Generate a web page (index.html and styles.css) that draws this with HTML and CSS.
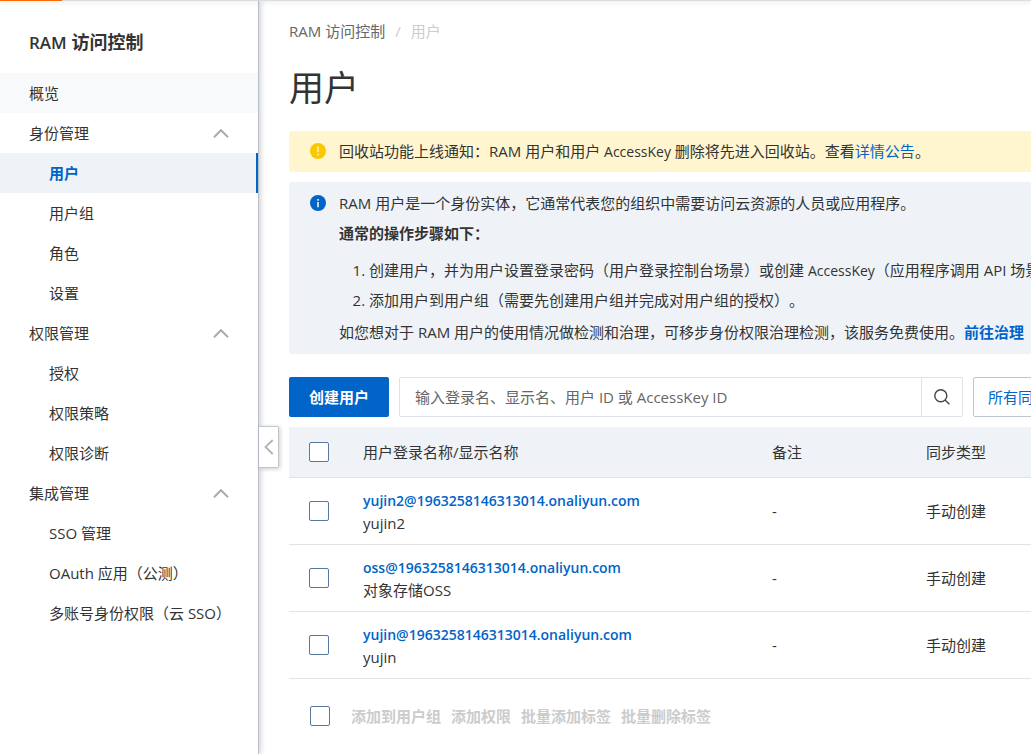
FILE: index.html
```html
<!DOCTYPE html>
<html lang="zh-CN">
<head>
<meta charset="utf-8">
<meta name="viewport" content="width=device-width, initial-scale=1">
<title>RAM 访问控制</title>
<link rel="stylesheet" href="styles.css">
</head>
<body>
<div class="loading-bar"><span class="loading-progress"></span></div>
<div class="layout">
  <aside class="sidebar">
    <h2 class="sidebar-title"><span class="latin">RAM</span> 访问控制</h2>
    <nav class="menu">
      <a class="item hovered" href="#">概览</a>
      <button class="item group" type="button">身份管理<svg class="chevron" viewBox="0 0 16 9"><path d="M1 8.2 8 1.2l7 7"/></svg></button>
      <a class="item child active" href="#">用户</a>
      <a class="item child" href="#">用户组</a>
      <a class="item child" href="#">角色</a>
      <a class="item child" href="#">设置</a>
      <button class="item group" type="button">权限管理<svg class="chevron" viewBox="0 0 16 9"><path d="M1 8.2 8 1.2l7 7"/></svg></button>
      <a class="item child" href="#">授权</a>
      <a class="item child" href="#">权限策略</a>
      <a class="item child" href="#">权限诊断</a>
      <button class="item group" type="button">集成管理<svg class="chevron" viewBox="0 0 16 9"><path d="M1 8.2 8 1.2l7 7"/></svg></button>
      <a class="item child" href="#">SSO 管理</a>
      <a class="item child" href="#">OAuth 应用（公测）</a>
      <a class="item child" href="#">多账号身份权限（云 SSO）</a>
    </nav>
    <button class="collapse" type="button" aria-label="收起导航"><svg viewBox="0 0 10 16"><path d="M8.7 1 1.5 8l7.2 7"/></svg></button>
  </aside>
  <main class="content">
    <nav class="breadcrumb"><a href="#">RAM 访问控制</a><span class="slash">/</span><span class="current">用户</span></nav>
    <h1 class="page-title">用户</h1>
    <section class="notice warning">
      <svg class="notice-icon" viewBox="0 0 16 16"><circle cx="8" cy="8" r="8" fill="#fac800"/><path d="M8 3.6v5.6M8 10.8v1.6" stroke="#fff6cf" stroke-width="1.4"/></svg>
      <p>回收站功能上线通知：RAM 用户和用户 <span class="term">AccessKey</span> 删除将先进入回收站。查看<a href="#">详情公告</a>。</p>
    </section>
    <section class="notice info">
      <svg class="notice-icon" viewBox="0 0 16 16"><circle cx="8" cy="8" r="8" fill="#0064c8"/><path d="M8 4v1.7M8 7v5.2" stroke="#eff3f8" stroke-width="1.6"/></svg>
      <div>
        <p>RAM 用户是一个身份实体，它通常代表您的组织中需要访问云资源的人员或应用程序。</p>
        <p><strong>通常的操作步骤如下：</strong></p>
        <ol class="steps">
          <li>创建用户，并为用户设置登录密码（用户登录控制台场景）或创建 <span class="term">AccessKey</span>（应用程序调用 API 场景）。</li>
          <li>添加用户到用户组（需要先创建用户组并完成对用户组的授权）。</li>
        </ol>
        <p>如您想对于 RAM 用户的使用情况做检测和治理，可移步身份权限治理检测，该服务免费使用。<a class="strong-link" href="#">前往治理</a></p>
      </div>
    </section>
    <div class="toolbar">
      <button class="primary" type="button">创建用户</button>
      <form class="search">
        <input type="text" aria-label="搜索用户" placeholder="输入登录名、显示名、用户 ID 或 AccessKey ID">
        <button type="button" aria-label="搜索"><svg viewBox="0 0 16 16"><circle cx="6.8" cy="6.8" r="6"/><path d="m11 11 4.4 4.2"/></svg></button>
      </form>
      <select class="filter" aria-label="同步类型"><option>所有同步类型</option></select>
    </div>
    <table class="users">
      <colgroup><col class="col-check"><col class="col-name"><col class="col-note"><col></colgroup>
      <thead>
        <tr><th><input type="checkbox" aria-label="全选"></th><th>用户登录名称/显示名称</th><th>备注</th><th>同步类型</th></tr>
      </thead>
      <tbody>
        <tr><td><input type="checkbox" aria-label="选择 yujin2"></td><td><a href="#">yujin2@1963258146313014.onaliyun.com</a><div>yujin2</div></td><td>-</td><td>手动创建</td></tr>
        <tr><td><input type="checkbox" aria-label="选择 oss"></td><td><a href="#">oss@1963258146313014.onaliyun.com</a><div>对象存储OSS</div></td><td>-</td><td>手动创建</td></tr>
        <tr><td><input type="checkbox" aria-label="选择 yujin"></td><td><a href="#">yujin@1963258146313014.onaliyun.com</a><div>yujin</div></td><td>-</td><td>手动创建</td></tr>
      </tbody>
    </table>
    <div class="batch">
      <input type="checkbox" aria-label="全选用户">
      <button type="button" disabled>添加到用户组</button>
      <button type="button" disabled>添加权限</button>
      <button type="button" disabled>批量添加标签</button>
      <button type="button" disabled>批量删除标签</button>
    </div>
  </main>
</div>
</body>
</html>
```
FILE: styles.css
```css
* { box-sizing: border-box; }

body {
  margin: 0;
  overflow: hidden;
  background: #fff;
  color: #333;
  font: 15px/22px "Open Sans", "Noto Sans CJK SC", sans-serif;
  text-spacing-trim: space-all;
}

h1, h2, p, ol { margin: 0; }
a { color: #0064c8; text-decoration: none; }
button, input, select { font: inherit; }
button { padding: 0; border: 0; background: none; color: inherit; }
svg { display: block; fill: none; }

.loading-bar {
  position: relative;
  z-index: 2;
  height: 1px;
  background: #d9dddc;
  box-shadow: 0 1px 5px rgba(0, 0, 0, .25);
}
.loading-progress { display: block; width: 62px; height: 1px; background: #ff6a00; }

.layout { display: flex; min-height: calc(100vh - 1px); }

.sidebar {
  position: relative;
  z-index: 1;
  flex: none;
  width: 259px;
  border-right: 1px solid #b9bfc8;
  box-shadow: 1px 0 6px rgba(0, 0, 0, .22);
  background: #fff;
}
.sidebar-title { padding: 29px 29px 19px; font-size: 18px; line-height: 24px; font-weight: 700; }
.latin { font-size: 17px; line-height: 1; font-weight: 600; }

.menu { display: flex; flex-direction: column; }
.item {
  display: flex;
  align-items: center;
  justify-content: space-between;
  height: 40px;
  padding: 0 29px;
  color: #333;
  text-align: left;
  white-space: nowrap;
}
.child { padding: 0 0 0 49px; }
.hovered { background: #f7f9fa; }
.active { border-right: 2px solid #0064c8; background: #eff3f8; color: #0064c8; font-weight: 600; }
.chevron { width: 16px; height: 9px; stroke: #aaa; stroke-width: 2; }

.collapse {
  position: absolute;
  top: 425px;
  left: 100%;
  display: flex;
  align-items: center;
  justify-content: center;
  width: 20px;
  height: 42px;
  margin-left: 1px;
  border: 1px solid #c0c6cc;
  border-left: 0;
  border-radius: 0 2px 2px 0;
  background: #fff;
  box-shadow: 1px 1px 4px rgba(0, 0, 0, .2);
}
.collapse svg { width: 10px; height: 16px; stroke: #b3b3b3; stroke-width: 1.8; }

.content { flex: 1; min-width: 0; padding: 19px 0 20px 30px; overflow: hidden; white-space: nowrap; }

.breadcrumb { display: flex; gap: 10px; }
.breadcrumb a { color: #666; }
.slash, .current { color: #ccc; }
.page-title { padding: 23px 0 20px; font-size: 35px; line-height: 46px; font-weight: 400; }

.notice { display: flex; gap: 13px; padding: 5px 0 6px 21px; border-radius: 3px 0 0 3px; line-height: 30px; }
.notice-icon { flex: none; width: 16px; height: 16px; margin-top: 7px; }
.term { font-size: 14px; line-height: 1; }
.warning { background: #fff6cf; }
.info { margin-top: 10px; padding: 6px 0 7px 21px; background: #eff3f8; }
.steps { padding: 7px 0 2px 30px; }
.strong-link { font-weight: 700; }

.toolbar { display: flex; gap: 10px; margin: 23px 0 10px; }
.primary { flex: none; width: 100px; height: 40px; border-radius: 2px; background: #0064c8; color: #fff; font-weight: 700; }
.search { display: flex; flex: none; width: 564px; height: 40px; border: 1px solid #e0e2e5; border-radius: 2px; }
.search input { flex: 1; min-width: 0; padding: 0 15px; border: 0; background: none; outline: 0; }
.search input::placeholder { color: #666; opacity: 1; }
.search button { display: flex; align-items: center; justify-content: center; width: 41px; border-left: 1px solid #e0e2e5; }
.search svg { width: 16px; height: 16px; stroke: #444; stroke-width: 1.4; }
.filter {
  flex: none;
  width: 140px;
  height: 40px;
  padding: 0 14px;
  appearance: none;
  border: 1px solid #c0c6cc;
  border-radius: 2px;
  background: #fff;
  color: #0064c8;
}

.users { width: 100%; border-collapse: collapse; table-layout: fixed; }
.col-check { width: 58px; }
.col-name { width: 409px; }
.col-note { width: 154px; }
.users th, .users td { padding: 0 16px; border-bottom: 1px solid #e1e3e6; text-align: left; font-weight: 400; }
.users th { height: 50px; background: #eff3f8; }
.users td { height: 67px; }
.users th:first-child, .users td:first-child { padding: 0 0 0 20px; }
.users a { display: block; padding-top: 2px; font-size: 14px; font-weight: 600; }

input[type="checkbox"] {
  display: block;
  width: 20px;
  height: 20px;
  margin: 0;
  appearance: none;
  border: 1px solid #5878a0;
  border-radius: 2px;
  background: #fff;
}

.batch { display: flex; align-items: center; gap: 10px; padding: 26px 0 0 21px; }
.batch input { margin-right: 11px; }
.batch button { color: #ccc; font-weight: 700; }
```
